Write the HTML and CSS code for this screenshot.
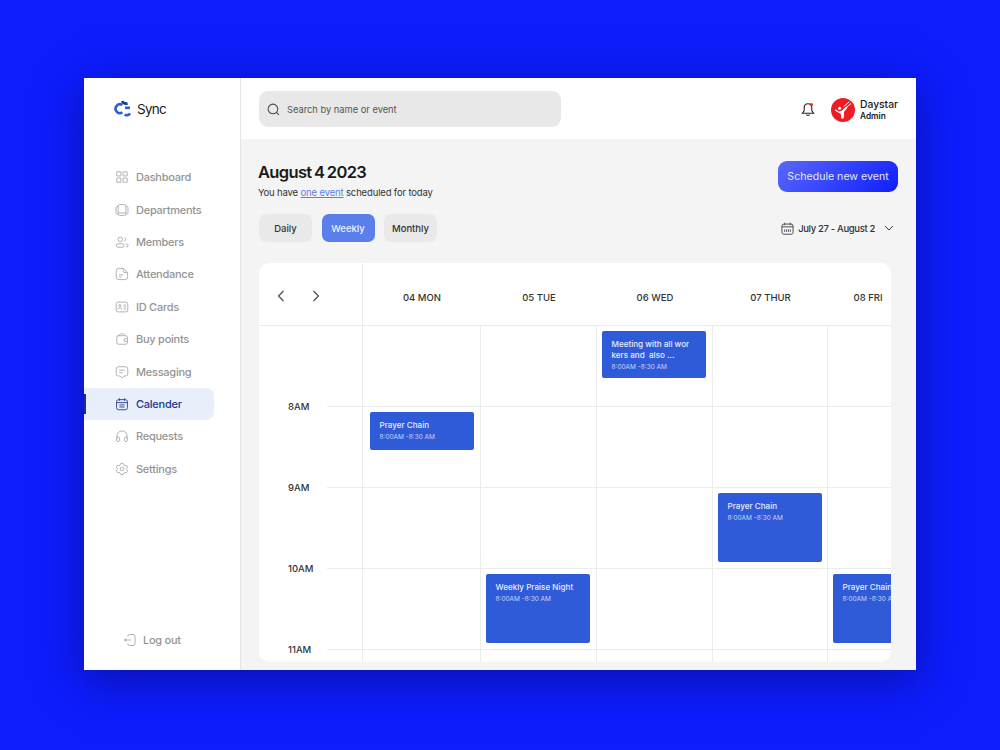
FILE: index.html
```html
<!DOCTYPE html>
<html lang="en">
<head>
  <meta charset="UTF-8" />
  <title>Sync - Calender</title>
  <link rel="stylesheet" href="styles.css">
</head>
<body>
  <div class="app">

    <!-- Sidebar -->
    <aside class="sidebar">
      <div class="logo">
        <svg width="18" height="18" viewBox="0 0 18 18" fill="none" stroke-width="2.6">
          <path d="M8.4 5A4.4 4.4 0 1 0 8.4 12.4" stroke="#2f5be0"/>
          <path d="M8 1.2C9 3 11 4 13.6 3.4" stroke="#123a8c"/>
          <path d="M11 7.8H16" stroke="#2f5be0"/>
          <path d="M10.6 14.6C12.6 15.8 15 15.2 16 13.4" stroke="#2f5be0"/>
        </svg>
        <span>Sync</span>
      </div>
      <nav class="menu">
        <a class="menu-item" href="#">
          <svg viewBox="0 0 16 16"><rect x="2" y="2" width="4.8" height="4.8" rx=".3"/><rect x="9.2" y="2" width="4.8" height="4.8" rx=".3"/><rect x="2" y="9.2" width="4.8" height="4.8" rx=".3"/><rect x="9.2" y="9.2" width="4.8" height="4.8" rx=".3"/></svg>
          Dashboard
        </a>
        <a class="menu-item" href="#">
          <svg viewBox="0 0 16 16"><rect x="3.6" y="1.8" width="8.8" height="12.4" rx="1.6"/><path d="M3.6 3.4C2 3.6 1.2 4.4 1.2 5.6V11C1.2 12.2 2 13 3.6 13M12.4 3.4C14 3.6 14.8 4.4 14.8 5.6V11C14.8 12.2 14 13 12.4 13M3.6 11.4H12.4"/></svg>
          Departments
        </a>
        <a class="menu-item" href="#">
          <svg viewBox="0 0 16 16"><circle cx="6" cy="5" r="2.6"/><rect x="1.4" y="10" width="9" height="4" rx="2"/><path d="M10.6 2.8A2.3 2.3 0 0 1 10.6 7.2M12.4 10H13A1.8 1.8 0 0 1 13 13.8H12.6"/></svg>
          Members
        </a>
        <a class="menu-item" href="#">
          <svg viewBox="0 0 16 16"><path d="M4.4 1.6H9.6L14.4 6.4V11.4A3 3 0 0 1 11.4 14.4H4.4A3 3 0 0 1 1.4 11.4V4.6A3 3 0 0 1 4.4 1.6ZM9.4 1.8V4.4A2 2 0 0 0 11.4 6.4H14.2M4.6 9H9.6M4.6 11.4H7.6"/></svg>
          Attendance
        </a>
        <a class="menu-item" href="#">
          <svg viewBox="0 0 16 16"><rect x="1.4" y="2.4" width="13.2" height="11.2" rx="2"/><circle cx="5.6" cy="6.4" r="1.3"/><path d="M3.4 11C3.6 9.6 4.4 9 5.6 9S7.6 9.6 7.8 11M9.8 5.8H12.6M9.8 8H12.6M9.8 10.2H12.6"/></svg>
          ID Cards
        </a>
        <a class="menu-item" href="#">
          <svg viewBox="0 0 16 16"><path d="M2 6.4C2 5 3 4.2 4.4 4.2H12A2 2 0 0 1 14.2 6.2V12A2 2 0 0 1 12.2 14H4A2 2 0 0 1 2 12ZM2.4 5.2L6.8 2.2C8 1.4 9.4 1.6 10.2 2.6L11.4 4.2M14.2 7.8H11.4A1.5 1.5 0 0 0 11.4 10.8H14.2"/></svg>
          Buy points
        </a>
        <a class="menu-item" href="#">
          <svg viewBox="0 0 16 16"><path d="M4 2H12A2.6 2.6 0 0 1 14.6 4.6V10A2.6 2.6 0 0 1 12 12.6H10.2L8 14.6L5.8 12.6H4A2.6 2.6 0 0 1 1.4 10V4.6A2.6 2.6 0 0 1 4 2ZM4.8 6H11.2M4.8 8.8H8.8"/></svg>
          Messaging
        </a>
        <a class="menu-item active" href="#">
          <svg viewBox="0 0 16 16"><rect x="1.8" y="3" width="12.4" height="11.6" rx="2.4"/><path d="M5 1.4V4.4M11 1.4V4.4M1.8 6.4H14.2M5 9H11M5 11.4H11"/></svg>
          Calender
        </a>
        <a class="menu-item" href="#">
          <svg viewBox="0 0 16 16"><path d="M2.2 11V8A5.8 5.8 0 0 1 13.8 8V11"/><rect x="1.8" y="9" width="3.4" height="5.4" rx="1.7"/><rect x="10.8" y="9" width="3.4" height="5.4" rx="1.7"/></svg>
          Requests
        </a>
        <a class="menu-item" href="#">
          <svg viewBox="0 0 16 16"><circle cx="8" cy="8" r="2.1"/><path d="M6.6 1.6H9.4L9.9 3.2L11.5 4.1L13.1 3.7L14.5 6.1L13.4 7.2V8.8L14.5 9.9L13.1 12.3L11.5 11.9L9.9 12.8L9.4 14.4H6.6L6.1 12.8L4.5 11.9L2.9 12.3L1.5 9.9L2.6 8.8V7.2L1.5 6.1L2.9 3.7L4.5 4.1L6.1 3.2Z" stroke-linejoin="round"/></svg>
          Settings
        </a>
      </nav>
      <a class="logout" href="#">
        <svg viewBox="0 0 16 16"><path d="M5.4 4.4V4A2.4 2.4 0 0 1 7.8 1.6H11.4A2.4 2.4 0 0 1 13.8 4V12A2.4 2.4 0 0 1 11.4 14.4H7.8A2.4 2.4 0 0 1 5.4 12V11.6M9.6 8H1.6M3.8 5.8L1.6 8L3.8 10.2"/></svg>
        Log out
      </a>
    </aside>

    <div class="content">
      <!-- Top bar -->
      <header class="topbar">
        <div class="search">
          <svg width="13" height="13" viewBox="0 0 14 14" fill="none" stroke="#444" stroke-width="1.1"><circle cx="6.4" cy="6.4" r="5.2"/><path d="M10.2 10.2L12.8 12.8"/></svg>
          <span>Search by name or event</span>
        </div>
        <div class="top-right">
          <svg class="bell" width="14" height="15" viewBox="0 0 14 15" fill="none" stroke="#222" stroke-width="1.1"><path d="M7 1.8C4.6 1.8 3.2 3.6 3.2 5.8V8C3.2 9.2 2.4 10 1.4 11.2H12.6C11.6 10 10.8 9.2 10.8 8V5.8C10.8 3.6 9.4 1.8 7 1.8ZM5.4 12.6C5.8 13.6 8.2 13.6 8.6 12.6"/><circle cx="10.4" cy="2.6" r="1.6" fill="#e8262d" stroke="none"/></svg>
          <div class="profile">
            <svg width="24" height="24" viewBox="0 0 24 24"><circle cx="12" cy="12" r="12" fill="#ee1c25"/><path d="M4.4 11.2L7.8 13.6L10.6 12.8L15.4 8.6L16.4 9.8L13 14L12.8 20.2L10.4 20.8L9.8 16L4 12.6Z" fill="#fff"/><circle cx="8.6" cy="10.2" r="1.5" fill="#fff"/><path d="M12.6 8.6L18.4 3.8M15.2 9.4L20 5.6" stroke="#fff" stroke-width="1"/></svg>
            <div class="profile-text">
              <strong>Daystar</strong>
              <span>Admin</span>
            </div>
          </div>
        </div>
      </header>

      <main class="main">
        <div class="page-head">
          <div>
            <h1>August 4 2023</h1>
            <p>You have <a href="#">one event</a> scheduled for today</p>
          </div>
          <button class="btn-schedule">Schedule new event</button>
        </div>

        <div class="filters">
          <div class="tabs">
            <button class="tab">Daily</button>
            <button class="tab active">Weekly</button>
            <button class="tab">Monthly</button>
          </div>
          <div class="range">
            <svg width="13" height="13" viewBox="0 0 14 14" fill="none" stroke="#444" stroke-width="1"><rect x="1" y="2.2" width="12" height="11" rx="2.2"/><path d="M4 .8V3.4M10 .8V3.4M1 5.2H13M4 8V10.6M6 8V10.6M8 8V10.6M10 8V10.6"/></svg>
            <span>July 27 - August 2</span>
            <svg class="chev" width="10" height="6" viewBox="0 0 10 6" fill="none" stroke="#444" stroke-width="1"><path d="M1 1L5 5L9 1"/></svg>
          </div>
        </div>

        <!-- Calendar -->
        <section class="calendar">
          <div class="cal-head">
            <div class="cal-nav">
              <svg width="8" height="12" viewBox="0 0 8 12" fill="none" stroke="#444" stroke-width="1.1"><path d="M6.5 1L1.5 6L6.5 11"/></svg>
              <svg width="8" height="12" viewBox="0 0 8 12" fill="none" stroke="#444" stroke-width="1.1"><path d="M1.5 1L6.5 6L1.5 11"/></svg>
            </div>
            <div class="day">04 MON</div>
            <div class="day">05 TUE</div>
            <div class="day">06 WED</div>
            <div class="day">07 THUR</div>
            <div class="day">08 FRI</div>
          </div>

          <div class="row">
            <div class="time"></div>
            <div class="cell"></div>
            <div class="cell"></div>
            <div class="cell">
              <div class="event short">
                <h4>Meeting with all wor<br>kers and &nbsp;also ...</h4>
                <span>8:00AM -8:30 AM</span>
              </div>
            </div>
            <div class="cell"></div>
            <div class="cell"></div>
          </div>

          <div class="row">
            <div class="time"><b>8AM</b></div>
            <div class="cell">
              <div class="event prayer">
                <h4>Prayer Chain</h4>
                <span>8:00AM -8:30 AM</span>
              </div>
            </div>
            <div class="cell"></div>
            <div class="cell"></div>
            <div class="cell"></div>
            <div class="cell"></div>
          </div>

          <div class="row">
            <div class="time"><b>9AM</b></div>
            <div class="cell"></div>
            <div class="cell"></div>
            <div class="cell"></div>
            <div class="cell">
              <div class="event">
                <h4>Prayer Chain</h4>
                <span>8:00AM -8:30 AM</span>
              </div>
            </div>
            <div class="cell"></div>
          </div>

          <div class="row">
            <div class="time"><b>10AM</b></div>
            <div class="cell"></div>
            <div class="cell">
              <div class="event">
                <h4>Weekly Praise Night</h4>
                <span>8:00AM -8:30 AM</span>
              </div>
            </div>
            <div class="cell"></div>
            <div class="cell"></div>
            <div class="cell">
              <div class="event">
                <h4>Prayer Chain</h4>
                <span>8:00AM -8:30 AM</span>
              </div>
            </div>
          </div>

          <div class="row">
            <div class="time"><b>11AM</b></div>
            <div class="cell"></div>
            <div class="cell"></div>
            <div class="cell"></div>
            <div class="cell"></div>
            <div class="cell"></div>
          </div>
        </section>
      </main>
    </div>
  </div>
</body>
</html>
```

FILE: styles.css
```css
* {
  box-sizing: border-box;
}

html,
body {
  height: 100%;
}

body {
  margin: 0;
  padding: 78px 84px 80px;
  background-color: #0d1dfc;
  font-family: Inter, "Liberation Sans", sans-serif;
  color: #1a1a1a;
}

.app {
  display: flex;
  height: 592px;
  background-color: #fff;
  box-shadow: 0 10px 40px rgba(10, 10, 120, 0.6);
  overflow: hidden;
}

a {
  text-decoration: none;
}

/* Sidebar */
.sidebar {
  width: 157px;
  flex-shrink: 0;
  display: flex;
  flex-direction: column;
  background-color: #fff;
  border-right: 1px solid #e4e4e4;
}

.logo {
  display: flex;
  align-items: center;
  gap: 5px;
  height: 61px;
  padding: 0 0 0 30px;
  font-size: 13.5px;
  font-weight: 400;
  letter-spacing: -0.7px;
}

.menu {
  display: flex;
  flex-direction: column;
  margin-top: 22px;
}

.menu-item {
  position: relative;
  display: flex;
  align-items: center;
  gap: 7px;
  width: 129.5px;
  height: 32.4px;
  padding-left: 31px;
  font-size: 11px;
  font-weight: 500;
  letter-spacing: -0.25px;
  color: #949494;
  border-radius: 0 8px 8px 0;
}

.menu-item svg,
.logout svg {
  width: 14px;
  height: 14px;
  flex-shrink: 0;
  fill: none;
  stroke: #a8a8a8;
  stroke-width: 1;
}

.menu-item.active {
  background-color: #e9eefb;
  color: #23378f;
}

.menu-item.active svg {
  stroke: #23378f;
}

.menu-item.active::before {
  content: "";
  position: absolute;
  left: 0;
  top: 6px;
  width: 2px;
  height: 20px;
  background-color: #1b2f86;
}

.logout {
  display: flex;
  align-items: center;
  gap: 6px;
  margin-top: auto;
  margin-bottom: 23px;
  padding-left: 39px;
  font-size: 11px;
  font-weight: 500;
  letter-spacing: -0.25px;
  color: #949494;
}

/* Top bar */
.content {
  flex: 1;
  min-width: 0;
  display: flex;
  flex-direction: column;
}

.topbar {
  display: flex;
  align-items: center;
  justify-content: space-between;
  height: 61px;
  flex-shrink: 0;
  padding: 0 18px 0 18px;
  background-color: #fff;
}

.search {
  display: flex;
  align-items: center;
  gap: 7px;
  width: 302px;
  height: 36px;
  margin-top: 1px;
  padding-left: 8px;
  background-color: #e8e8e8;
  border-radius: 9px;
  font-size: 9.3px;
  color: #555;
}

.top-right {
  display: flex;
  align-items: center;
  gap: 16px;
  margin-top: 2px;
}

.profile {
  display: flex;
  align-items: center;
  gap: 5px;
}

.profile-text {
  display: flex;
  flex-direction: column;
  gap: 1px;
}

.profile-text strong {
  font-size: 10.3px;
  font-weight: 500;
}

.profile-text span {
  font-size: 8.3px;
  font-weight: 600;
}

/* Main area */
.main {
  flex: 1;
  min-height: 0;
  padding: 22px 18px 0 17px;
  background-color: #f4f4f4;
  overflow: hidden;
}

.page-head {
  display: flex;
  justify-content: space-between;
  align-items: flex-start;
}

.page-head h1 {
  margin: 1px 0 3px;
  font-size: 16.5px;
  line-height: 21px;
  font-weight: 600;
  letter-spacing: -0.65px;
  word-spacing: -1px;
}

.page-head p {
  margin: 0;
  font-size: 9.5px;
  line-height: 13px;
  letter-spacing: -0.15px;
  color: #333;
}

.page-head p a {
  color: #5b7fe8;
  text-decoration: underline;
}

.btn-schedule {
  width: 120px;
  height: 31px;
  border: 0;
  border-radius: 9px;
  background: linear-gradient(135deg, #5a68fb, #0f1efb);
  color: #e4e6ff;
  font-family: inherit;
  font-size: 10.6px;
  cursor: pointer;
}

.filters {
  display: flex;
  justify-content: space-between;
  align-items: center;
  margin-top: 15px;
  padding: 0 4px 0 1px;
}

.tabs {
  display: flex;
  gap: 9.5px;
}

.tab {
  width: 53px;
  height: 28px;
  border: 0;
  border-radius: 7px;
  background-color: #e9e9e9;
  color: #333;
  font-family: inherit;
  font-size: 9.5px;
  font-weight: 500;
  cursor: pointer;
}

.tab.active {
  background-color: #5a7eea;
  color: #eef2ff;
}

.range {
  display: flex;
  align-items: center;
  gap: 4px;
  font-size: 9.5px;
  font-weight: 500;
  letter-spacing: -0.35px;
  color: #333;
}

.chev {
  margin-left: 5px;
}

/* Calendar */
.calendar {
  width: 632px;
  height: 399px;
  margin: 21px 0 0 1px;
  background-color: #fff;
  border-radius: 10px;
  overflow: hidden;
}

.cal-head {
  display: grid;
  grid-template-columns: 104px 118px 116px 116px 115px 80px;
  height: 63px;
  border-bottom: 1px solid #ececec;
}

.cal-nav {
  display: flex;
  align-items: center;
  justify-content: space-between;
  padding: 4px 42px 0 18px;
  border-right: 1px solid #ececec;
}

.day {
  display: flex;
  align-items: center;
  justify-content: center;
  padding-top: 6px;
  font-size: 9.5px;
  font-weight: 500;
  color: #333;
}

.row {
  display: grid;
  grid-template-columns: 104px 118px 116px 116px 115px 116px;
  height: 81px;
}

.row:nth-child(2) {
  height: 80px;
}

.row + .row .cell {
  border-top: 1px solid #ececec;
}

.row:nth-child(2) .cell {
  border-top: 0;
}

.cell {
  padding: 5px;
  border-right: 1px solid #ececec;
}

.time + .cell {
  padding-left: 7px;
}

.time {
  position: relative;
  border-right: 1px solid #ececec;
}

.time b {
  position: absolute;
  left: 29px;
  top: -6px;
  font-size: 9.5px;
  line-height: 14px;
  font-weight: 500;
  color: #333;
}

.time:not(:empty)::after {
  content: "";
  position: absolute;
  left: 68px;
  right: 0;
  top: 0;
  height: 1px;
  background-color: #ececec;
}

.event {
  width: 104px;
  height: 69px;
  padding: 8px 9.5px 0;
  background-color: #2f5bd9;
  border-radius: 2px;
  color: #e6ecff;
}

.event.short {
  height: 47px;
}

.event.prayer {
  height: 38px;
}

.event h4 {
  margin: 0 0 1px;
  font-size: 8.1px;
  line-height: 11px;
  font-weight: 500;
  white-space: nowrap;
}

.event span {
  display: block;
  font-size: 6.5px;
  line-height: 10px;
  white-space: nowrap;
  color: #c9d5f8;
}
```
